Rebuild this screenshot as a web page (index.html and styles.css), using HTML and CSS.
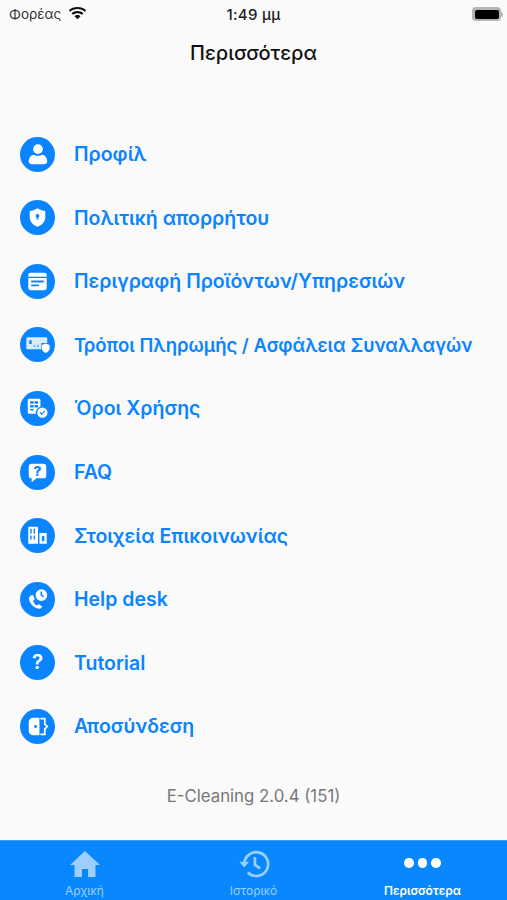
FILE: index.html
```html
<!DOCTYPE html>
<html lang="el">
<head>
<meta charset="utf-8">
<title>Περισσότερα</title>
<link rel="stylesheet" href="styles.css">
</head>
<body>
<div class="app">
  <header class="status">
    <div class="status-left">
      <span>Φορέας</span>
      <svg class="wifi" viewBox="0 0 20 15" width="19" height="14"><path d="M10 2.200c3 0 5.700 1.100 7.800 3l1.500-1.700C16.800 1.200 13.500 0 10 0S3.200 1.200.7 3.500l1.500 1.700c2.100-1.900 4.800-3 7.800-3z"/><path d="M10 6.600c1.900 0 3.500.7 4.800 1.800l1.600-1.700C14.700 5.200 12.400 4.300 10 4.300s-4.700.9-6.400 2.400l1.600 1.700c1.300-1.100 2.900-1.800 4.800-1.800z"/><path d="M10 10.700c-1.300 0-2.400.5-3.200 1.200l3.200 3.100 3.200-3.100c-.8-.7-1.900-1.200-3.200-1.200z" transform="translate(0 -2)"/></svg>
    </div>
    <div class="status-time">1:49 μμ</div>
    <div class="status-right">
      <span class="battery"><span class="battery-fill"></span></span>
      <span class="battery-tip"></span>
    </div>
  </header>
  <h1 class="title">Περισσότερα</h1>
  <ul class="menu">
    <li class="item"><span class="icon"><svg viewBox="0 0 36 36"><circle cx="18.500" cy="12.500" r="5"/><path d="M9 25c0-4 2.500-6.500 5.300-6.800 1.400.8 2.900 1.200 4.200 1.200s2.800-.4 4.200-1.200c2.800.3 5.300 2.800 5.300 6.800 0 1.800-1.200 3-3 3H12c-1.800 0-3-1.200-3-3z"/></svg></span><span class="label">Προφίλ</span></li>
    <li class="item"><span class="icon"><svg viewBox="0 0 36 36"><path fill-rule="evenodd" d="M18 8.500c2.400 1.500 5 2.500 8 2.800v6.200c0 4.800-3.400 8.300-8 10-4.600-1.700-8-5.200-8-10v-6.200c3-.3 5.600-1.300 8-2.800zm0 6a1.800 1.800 0 0 0-.9 3.400V20h1.800v-2.100a1.800 1.800 0 0 0-.9-3.400z"/></svg></span><span class="label">Πολιτική απορρήτου</span></li>
    <li class="item"><span class="icon"><svg viewBox="0 0 36 36"><path fill-rule="evenodd" d="M11 9h14a2.500 2.500 0 0 1 2.500 2.500V13h-19v-1.500A2.500 2.500 0 0 1 11 9zm-2.500 5.500h19v10A2.500 2.500 0 0 1 25 27H11a2.500 2.500 0 0 1-2.500-2.500zM11.500 17v2h13v-2zm0 4v2h8v-2z"/></svg></span><span class="label">Περιγραφή Προϊόντων/Υπηρεσιών</span></li>
    <li class="item"><span class="icon"><svg viewBox="0 0 36 36"><path class="soft" fill-rule="evenodd" d="M8 10.500h18.500a1.500 1.500 0 0 1 1.500 1.500v4.500h-6V23H8a1.500 1.500 0 0 1-1.500-1.500V12A1.500 1.500 0 0 1 8 10.500zm1.500 3v4h2.500v-4zm4.500 5.500v1h2v-1zm3.500 0v1h2v-1z"/><path d="M26.500 17l4 1.400v3.400c0 2.400-1.800 4-4 5-2.200-1-4-2.600-4-5v-3.400z"/></svg></span><span class="label label-small">Τρόποι Πληρωμής / Ασφάλεια Συναλλαγών</span></li>
    <li class="item"><span class="icon"><svg viewBox="0 0 36 36"><path fill-rule="evenodd" d="M9.500 8h10A1.500 1.500 0 0 1 21 9.500v6.700a6.500 6.500 0 0 0-4.800 7.300H9.500A1.500 1.500 0 0 1 8 22V9.500A1.500 1.500 0 0 1 9.500 8zm1 2.500V13H14v-2.500zm4.500 0V13h3.500v-2.500zM10.500 14.500V17H14v-2.500zm4.500 0V17h3.500v-2.500zM10.500 18.500V20H14v-1.500z"/><path fill-rule="evenodd" d="M23 17a5.300 5.300 0 1 1 0 10.600A5.300 5.300 0 0 1 23 17zm2.200 3l-3 3-1.400-1.300-.8.800 2.200 2.100 3.800-3.800z"/></svg></span><span class="label">Όροι Χρήσης</span></li>
    <li class="item"><span class="icon"><svg viewBox="0 0 36 36"><path d="M12 9h12a3 3 0 0 1 3 3v9a3 3 0 0 1-3 3h-7l-5 4v-4a3 3 0 0 1-3-3v-9a3 3 0 0 1 3-3z"/><text class="glyph" x="18" y="21.500" text-anchor="middle">?</text></svg></span><span class="label">FAQ</span></li>
    <li class="item"><span class="icon"><svg viewBox="0 0 36 36"><path fill-rule="evenodd" d="M8.500 9h10v17.500h-10zm2 2v5h1.500v-5zm3.500 0v5h1.500v-5zM10.500 18v4h1.500v-4zm3.500 0v4h1.500v-4z"/><path fill-rule="evenodd" d="M20 15.500h7.500v11H20zm2.500 3v5.500h2.500v-5.500z"/></svg></span><span class="label">Στοιχεία Επικοινωνίας</span></li>
    <li class="item"><span class="icon"><svg viewBox="0 0 36 36"><path d="M9.500 15c-1.500 5 4 12 10 12.500 1.500.1 2.800-.8 3.300-2.300l-3.500-2.500-1.800 1.400c-2-.8-3.500-2.800-4-4.900l1.700-1.500-1.700-4.200c-1.800-.2-3.500 1.200-4 2.500z"/><path fill-rule="evenodd" d="M22 7.500a6 6 0 1 1 0 12 6 6 0 0 1 0-12zm-.9 2.300v4.200l2.800 1.700.8-1.200-2-1.300V9.800z"/></svg></span><span class="label">Help desk</span></li>
    <li class="item"><span class="icon"><svg viewBox="0 0 36 36"><text class="glyph glyph-large" x="18" y="25" text-anchor="middle">?</text></svg></span><span class="label">Tutorial</span></li>
    <li class="item"><span class="icon"><svg viewBox="0 0 36 36"><path fill-rule="evenodd" d="M13.500 9H20v18h-6.500A4.500 4.500 0 0 1 9 22.500v-9A4.500 4.500 0 0 1 13.500 9zm2.500 7.500a1.500 1.500 0 1 0 0 3 1.500 1.500 0 0 0 0-3z"/><path class="door-frame" d="M21 10h4.500v5.500L28 18l-2.500 2.500V26H21"/></svg></span><span class="label">Αποσύνδεση</span></li>
  </ul>
  <p class="version">E-Cleaning 2.0.4 (151)</p>
  <nav class="tabs">
    <div class="tab">
      <svg class="tab-icon" viewBox="0 0 32 28" width="32" height="28"><path d="M16 1L1 15h4.500v12h7.500v-8h6v8h7.500V15H31z"/></svg>
      <span>Αρχική</span>
    </div>
    <div class="tab">
      <svg class="tab-icon tab-stroke" viewBox="0 0 34 34" width="34" height="32"><path d="M6 17a13.500 13.500 0 1 1 4 9.700"/><path class="tab-fill" d="M.5 14.500h11L6 21z"/><path d="M18 9v9l6 4"/></svg>
      <span>Ιστορικό</span>
    </div>
    <div class="tab tab-active">
      <div class="dots"><i></i><i></i><i></i></div>
      <span>Περισσότερα</span>
    </div>
  </nav>
</div>
</body>
</html>
```
FILE: styles.css
```css
* { box-sizing: border-box; }
html, body { margin: 0; padding: 0; }
body { background: #fafafb; font-family: Inter, "Noto Sans", sans-serif; }
.app { width: 507px; height: 900px; display: flex; flex-direction: column; overflow: hidden; }
.status { height: 28px; display: grid; grid-template-columns: 1fr auto 1fr; align-items: center; padding: 0 4px 0 9px; font-size: 13.500px; color: #333; }
.status-left { display: flex; align-items: center; gap: 7px; }
.wifi { fill: #111; }
.status-time { color: #222; font-weight: 500; font-size: 15px; letter-spacing: .3px; margin-right: 5px; }
.status-right { display: flex; justify-content: flex-end; align-items: center; }
.battery { width: 29px; height: 14px; border-radius: 4px; background: #b5b5b5; padding: 2.500px; display: block; }
.battery-fill { display: block; width: 100%; height: 100%; background: #000; border-radius: 2px; }
.battery-tip { width: 2px; height: 5px; background: #b5b5b5; border-radius: 0 2px 2px 0; }
.title { margin: 0; height: 50px; line-height: 50px; text-align: center; font-size: 20px; font-weight: 500; color: #111; }
.menu { list-style: none; margin: 44.500px 0 0; padding: 0; display: grid; grid-auto-rows: 63.560px; }
.item { display: flex; align-items: center; padding-left: 20px; gap: 19px; }
.icon { width: 35px; height: 35px; border-radius: 50%; background: #0a84ff; flex: none; display: block; }
.icon svg { display: block; width: 35px; height: 35px; fill: #fff; }
.icon .soft { fill: #d9ecff; }
.icon .door-frame { fill: none; stroke: #fff; stroke-width: 1.800; }
.glyph { font-size: 14px; font-weight: 800; fill: #0a84ff; font-family: Inter, sans-serif; }
.glyph-large { font-size: 21px; font-weight: 600; fill: #fff; }
.label { color: #0a84ff; font-size: 19.500px; font-weight: 600; white-space: nowrap; }
.label-small { font-size: 18.500px; }
.version { margin: 28px 0 0; text-align: center; font-size: 16.800px; color: #777; }
.tabs { position: absolute; left: 0; right: 0; top: 840px; height: 60px; background: #0887ff; border-top: 1px solid #3d9eff; display: grid; grid-template-columns: repeat(3, 1fr); }
.tab { display: flex; flex-direction: column; align-items: center; font-size: 12px; color: #9ccfff; padding-top: 8px; gap: 4px; }
.tab-icon { fill: #9ccfff; display: block; height: 30px; }
.tab-stroke { fill: none; stroke: #9ccfff; stroke-width: 3; }
.tab-fill { fill: #9ccfff; stroke: none; }
.tab-active { color: #fff; font-weight: 600; }
.dots { height: 28px; display: flex; align-items: center; gap: 4px; margin-bottom: 2px; }
.dots i { width: 9.500px; height: 9.500px; border-radius: 50%; background: #fff; display: block; }
```
